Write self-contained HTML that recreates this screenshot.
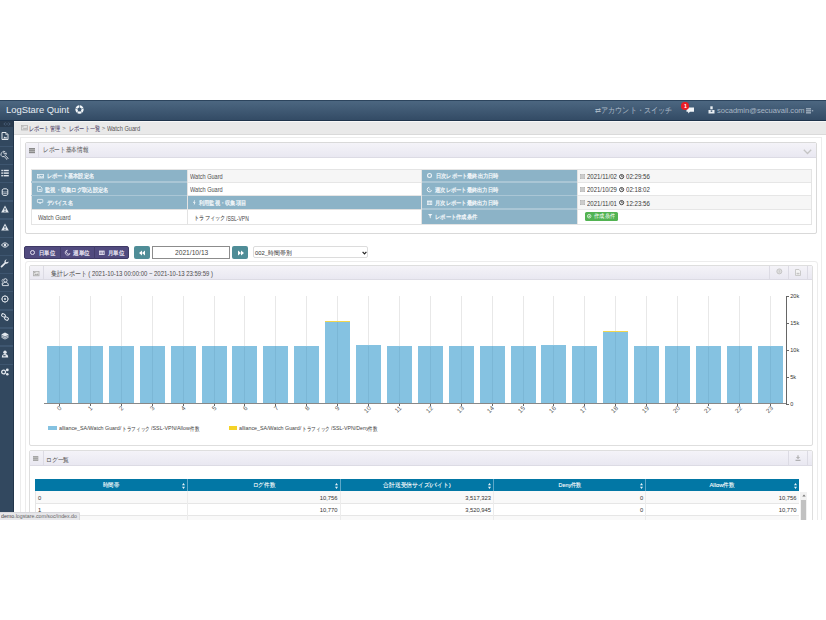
<!DOCTYPE html><html><head><meta charset="utf-8"><style>
*{box-sizing:border-box;margin:0;padding:0}
html,body{width:826px;height:620px;background:#fff;overflow:hidden;font-family:"Liberation Sans",sans-serif;color:#333}
.a{position:absolute}
.t{position:absolute;white-space:nowrap}
svg{position:absolute;overflow:visible}
</style></head><body>
<div class="a" style="left:0px;top:100px;width:826.00px;height:21.00px;background:linear-gradient(#4c6781,#334b65);border-top:1px solid #2c445d;border-bottom:1px solid #1e334b"></div>
<div id="f0" class="t fit" style="left:6px;top:104.95px;font-size:9.0px;line-height:11.70px;color:#e6edf3;transform:scaleX(1.0438);transform-origin:left center;--fw:63.2;">LogStare Quint</div>
<svg style="left:74.7px;top:104.5px" width="9" height="9" viewBox="0 0 9 9"><circle cx="4.5" cy="4.5" r="3.05" fill="none" stroke="#f4f8fb" stroke-width="2.2"/><g stroke="#3d5873" stroke-width="0.55"><line x1="4.50" y1="3.00" x2="4.50" y2="-0.10"/><line x1="5.93" y1="4.04" x2="8.87" y2="3.08"/><line x1="5.38" y1="5.71" x2="7.20" y2="8.22"/><line x1="3.62" y1="5.71" x2="1.80" y2="8.22"/><line x1="3.07" y1="4.04" x2="0.13" y2="3.08"/></g></svg>
<div id="f1" class="t fit" style="left:595px;top:105.61px;font-size:7.99px;line-height:10.39px;color:#a9b7c5;-webkit-text-stroke:0.05px currentColor;transform:scaleX(0.8851);transform-origin:left center;--fw:77;">&#8644;アカウント・スイッチ</div>
<svg style="left:686px;top:106px" width="9" height="9" viewBox="0 0 9 9"><path d="M0.5 1.5h7.5v4.2H4L2.2 7.5V5.7H0.5z" fill="#f2f5f8"/></svg>
<div class="a" style="left:681.3px;top:102.1px;width:7.6px;height:7.6px;border-radius:50%;background:#ea1c24"></div>
<div id="f2" class="t" style="left:683.9px;top:103.32px;font-size:5.2px;line-height:6.76px;color:#fff;transform-origin:left center;font-weight:bold">1</div>
<svg style="left:708px;top:106px" width="7" height="8" viewBox="0 0 7 8"><rect x="2.3" y="0.3" width="2.4" height="3" fill="#e9eef3"/><path d="M0.5 4h6v3.5h-6z" fill="#e9eef3"/><rect x="2.7" y="4.4" width="1.6" height="1.4" fill="#3d5670"/></svg>
<div id="f3" class="t fit" style="left:717px;top:105.76px;font-size:7.6px;line-height:9.88px;color:#a9b7c5;transform:scaleX(0.9918);transform-origin:left center;--fw:87.6;">socadmin@secuavail.com</div>
<svg style="left:806px;top:107.5px" width="8" height="6" viewBox="0 0 8 6"><g fill="#b9c6d3"><rect x="0" y="0.3" width="5" height="1.1"/><rect x="0" y="2.3" width="5" height="1.1"/><rect x="0" y="4.3" width="5" height="1.1"/><rect x="5.8" y="2.3" width="1.4" height="1"/></g></svg>
<div class="a" style="left:0px;top:121px;width:14.00px;height:399.00px;background:#32485f;"></div>
<div class="a" style="left:13px;top:121px;width:1.00px;height:399.00px;background:#22354a;"></div>
<div class="a" style="left:0px;top:121px;width:13.00px;height:6.00px;background:#28394c;"></div>
<div class="a" style="left:0px;top:145.8px;width:13.00px;height:1.40px;background:#3e5670;"></div>
<div class="a" style="left:0px;top:163.95000000000002px;width:13.00px;height:1.40px;background:#3e5670;"></div>
<div class="a" style="left:0px;top:182.10000000000002px;width:13.00px;height:1.40px;background:#3e5670;"></div>
<div class="a" style="left:0px;top:200.25px;width:13.00px;height:1.40px;background:#3e5670;"></div>
<div class="a" style="left:0px;top:218.4px;width:13.00px;height:1.40px;background:#3e5670;"></div>
<div class="a" style="left:0px;top:236.55px;width:13.00px;height:1.40px;background:#3e5670;"></div>
<div class="a" style="left:0px;top:254.7px;width:13.00px;height:1.40px;background:#3e5670;"></div>
<div class="a" style="left:0px;top:272.84999999999997px;width:13.00px;height:1.40px;background:#3e5670;"></div>
<div class="a" style="left:0px;top:291.0px;width:13.00px;height:1.40px;background:#3e5670;"></div>
<div class="a" style="left:0px;top:309.15000000000003px;width:13.00px;height:1.40px;background:#3e5670;"></div>
<div class="a" style="left:0px;top:327.3px;width:13.00px;height:1.40px;background:#3e5670;"></div>
<div class="a" style="left:0px;top:345.45px;width:13.00px;height:1.40px;background:#3e5670;"></div>
<div class="a" style="left:0px;top:363.59999999999997px;width:13.00px;height:1.40px;background:#3e5670;"></div>
<svg style="left:1.3px;top:132.0px" width="8" height="8" viewBox="0 0 8 8"><path d="M1 0.5h4l2 2v5h-6z" fill="none" stroke="#e3e8ee" stroke-width="1"/><path d="M4.8 0.6v2h2" fill="none" stroke="#e3e8ee" stroke-width="0.7"/><path d="M2.2 6.4l1.4-1.8 0.9 0.9 0.7-0.8 0.9 1.7z" fill="#e3e8ee"/></svg>
<svg style="left:1.3px;top:150.5px" width="8" height="8" viewBox="0 0 8 8"><path d="M1.2 1.4a1.9 1.9 0 0 1 2.6-0.9l-1.1 1.2 0.3 0.9 0.9 0.3 1.2-1.1a1.9 1.9 0 0 1-0.9 2.6l2.9 2.9-1.1 1.1-2.9-2.9a1.9 1.9 0 0 1-1.9-4.1z" fill="none" stroke="#e3e8ee" stroke-width="0.9"/></svg>
<svg style="left:1.3px;top:168.5px" width="8" height="8" viewBox="0 0 8 8"><g fill="#e3e8ee"><rect x="0.3" y="0.8" width="1.6" height="1.4"/><rect x="2.6" y="0.8" width="5.2" height="1.4"/><rect x="0.3" y="3.4" width="1.6" height="1.4"/><rect x="2.6" y="3.4" width="5.2" height="1.4"/><rect x="0.3" y="6" width="1.6" height="1.4"/><rect x="2.6" y="6" width="5.2" height="1.4"/></g></svg>
<svg style="left:1.3px;top:187.5px" width="8" height="8" viewBox="0 0 8 8"><path d="M1.2 1.8c0-1.4 5.6-1.4 5.6 0v4.6c0 1.4-5.6 1.4-5.6 0z" fill="none" stroke="#e3e8ee" stroke-width="1"/><path d="M1.2 3.4c1.4 0.8 4.2 0.8 5.6 0M1.2 4.9c1.4 0.8 4.2 0.8 5.6 0" fill="none" stroke="#e3e8ee" stroke-width="0.6"/></svg>
<svg style="left:1.3px;top:205.4px" width="8" height="8" viewBox="0 0 8 8"><path d="M4 0.4L7.8 7.5H0.2z" fill="#e3e8ee"/><rect x="3.45" y="2.9" width="1.1" height="2.5" fill="#32485f"/><rect x="3.45" y="6" width="1.1" height="0.9" fill="#32485f"/></svg>
<svg style="left:1.3px;top:223.4px" width="8" height="8" viewBox="0 0 8 8"><path d="M4 0.4L7.8 7.5H0.2z" fill="#e3e8ee"/><rect x="3.45" y="2.9" width="1.1" height="2.5" fill="#32485f"/><rect x="3.45" y="6" width="1.1" height="0.9" fill="#32485f"/></svg>
<svg style="left:1.3px;top:241.4px" width="8" height="8" viewBox="0 0 8 8"><path d="M0.5 4c1.9-2.8 5.1-2.8 7 0c-1.9 2.8-5.1 2.8-7 0z" fill="none" stroke="#e3e8ee" stroke-width="1"/><circle cx="4" cy="4" r="1.3" fill="#e3e8ee"/></svg>
<svg style="left:1.3px;top:259.6px" width="8" height="8" viewBox="0 0 8 8"><path d="M7.6 1.4a2.2 2.2 0 0 1-2.9 2.3l-3.5 3.6a0.9 0.9 0 0 1-1.3-1.3l3.6-3.5a2.2 2.2 0 0 1 2.3-2.9l-1.2 1.3 0.3 1 1 0.3z" fill="#e3e8ee"/></svg>
<svg style="left:1.3px;top:277.6px" width="8" height="8" viewBox="0 0 8 8"><circle cx="4.4" cy="2.4" r="1.7" fill="none" stroke="#e3e8ee" stroke-width="0.9"/><path d="M1.4 7.6c0-2.4 1.2-3.3 3-3.3s3 0.9 3 3.3z" fill="none" stroke="#e3e8ee" stroke-width="0.9"/><path d="M2.4 1.2a1.5 1.5 0 0 0-0.6 2.8M1 6.6c0-1.4 0.4-2 1-2.4" fill="none" stroke="#e3e8ee" stroke-width="0.7"/></svg>
<svg style="left:1.3px;top:295.4px" width="8" height="8" viewBox="0 0 8 8"><circle cx="4" cy="4" r="3.1" fill="none" stroke="#e3e8ee" stroke-width="1"/><circle cx="4" cy="4" r="1" fill="#e3e8ee"/><path d="M4 0.4v1.2M4 6.4v1.2M0.4 4h1.2M6.4 4h1.2" stroke="#e3e8ee" stroke-width="0.8"/></svg>
<svg style="left:1.3px;top:313.3px" width="8" height="8" viewBox="0 0 8 8"><g fill="none" stroke="#e3e8ee" stroke-width="1"><rect x="0.5" y="1" width="4" height="2.8" rx="1.4" transform="rotate(30 2.5 2.4)"/><rect x="3.5" y="4.2" width="4" height="2.8" rx="1.4" transform="rotate(30 5.5 5.6)"/></g></svg>
<svg style="left:1.3px;top:331.8px" width="8" height="8" viewBox="0 0 8 8"><path d="M4 0.6L7.4 2.3V5.7L4 7.4L0.6 5.7V2.3z" fill="#e3e8ee"/><path d="M0.8 3.3L4 4.9L7.2 3.3M0.8 4.8L4 6.4L7.2 4.8" fill="none" stroke="#32485f" stroke-width="0.6"/></svg>
<svg style="left:1.3px;top:349.8px" width="8" height="8" viewBox="0 0 8 8"><circle cx="4" cy="2.2" r="1.7" fill="#e3e8ee"/><path d="M0.8 7.6c0-2.6 1.4-3.5 3.2-3.5s3.2 0.9 3.2 3.5z" fill="#e3e8ee"/><rect x="2.2" y="5.2" width="2.4" height="1.1" fill="#32485f"/></svg>
<svg style="left:1.3px;top:367.6px" width="8" height="8" viewBox="0 0 8 8"><circle cx="2.6" cy="4" r="1.9" fill="none" stroke="#e3e8ee" stroke-width="1.3"/><circle cx="6.3" cy="1.9" r="1.4" fill="#e3e8ee"/><circle cx="6.3" cy="6.2" r="1.3" fill="#e3e8ee"/></svg>
<svg style="left:3px;top:122px" width="8" height="4" viewBox="0 0 8 4"><path d="M2.5 0.5L0.8 2L2.5 3.5M5.5 0.5L7.2 2L5.5 3.5" fill="none" stroke="#4e6580" stroke-width="0.8"/><rect x="2.8" y="1.6" width="2.4" height="0.8" fill="#4e6580"/></svg>
<div class="a" style="left:14px;top:121px;width:812.00px;height:14.20px;background:#e9e9e9;border-top:1px solid #f7f7f7;border-bottom:1px solid #dadada"></div>
<svg style="left:20.6px;top:125.3px" width="7" height="5.4" viewBox="0 0 7 5.4"><rect x="0.4" y="0.4" width="6.2" height="4.6" fill="#e4e4e4" stroke="#b5b5b5" stroke-width="0.8"/><rect x="1.2" y="1.2" width="1.4" height="1.1" fill="#b5b5b5"/><path d="M1.2 4.4l1.8-1.6 1 0.8 1.2-1.2 0.6 0.6v1.4z" fill="#b5b5b5"/></svg>
<div id="f4" class="t fit" style="left:29.3px;top:124.52px;font-size:6.59px;line-height:8.57px;color:#4e3f66;-webkit-text-stroke:0.05px currentColor;transform:scaleX(0.7333);transform-origin:left center;--fw:30.8;">レポート管理</div>
<div id="f5" class="t" style="left:62.3px;top:124.90px;font-size:6px;line-height:7.80px;color:#666;transform-origin:left center;">&gt;</div>
<div id="f6" class="t fit" style="left:68.6px;top:124.52px;font-size:6.59px;line-height:8.57px;color:#4e3f66;-webkit-text-stroke:0.05px currentColor;transform:scaleX(0.7381);transform-origin:left center;--fw:31;">レポート一覧</div>
<div id="f7" class="t" style="left:101.8px;top:124.90px;font-size:6px;line-height:7.80px;color:#666;transform-origin:left center;">&gt;</div>
<div id="f8" class="t fit" style="left:107.2px;top:124.71px;font-size:6.3px;line-height:8.19px;color:#555;transform:scaleX(0.8976);transform-origin:left center;--fw:33.1;">Watch Guard</div>
<div class="a" style="left:20px;top:137px;width:802px;height:383px;border:1px solid #ececec;border-bottom:none"></div>
<div class="a" style="left:25px;top:142px;width:792px;height:92px;border:1px solid #d9d9d9;border-radius:2px;background:#fff"></div>
<div class="a" style="left:26px;top:143px;width:790.00px;height:15.00px;background:linear-gradient(#f4f3f8,#e9e8f1);border-bottom:1px solid #dcdbe4"></div>
<div class="a" style="left:38px;top:143px;width:1.00px;height:15.00px;background:#dcdbe4;"></div>
<svg style="left:29px;top:147.6px" width="6" height="5.2" viewBox="0 0 6 5.2"><rect x="0" y="0" width="6" height="5.2" fill="#8a8a8a"/><rect x="0" y="1.6" width="6" height="0.5" fill="#dcdcdc"/><rect x="0" y="3.2" width="6" height="0.5" fill="#dcdcdc"/></svg>
<div id="f9" class="t fit" style="left:42.6px;top:146.35px;font-size:6.7px;line-height:8.71px;color:#666;-webkit-text-stroke:0.05px currentColor;transform:scaleX(0.8089);transform-origin:left center;--fw:45.3;">レポート基本情報</div>
<svg style="left:803px;top:149px" width="9" height="6" viewBox="0 0 9 6"><path d="M0.8 0.8L4.5 4.5L8.2 0.8" fill="none" stroke="#c4c4c4" stroke-width="1.3"/></svg>
<div class="a" style="left:31px;top:169px;width:156.00px;height:40.00px;background:#8cb3c7;"></div>
<div class="a" style="left:187px;top:169px;width:234.00px;height:13.00px;background:#f6f6f6;"></div>
<div class="a" style="left:187px;top:182px;width:234.00px;height:13.30px;background:#fff;"></div>
<div class="a" style="left:187px;top:195.3px;width:234.00px;height:13.70px;background:#8cb3c7;"></div>
<div class="a" style="left:31px;top:209px;width:390.00px;height:15.50px;background:#fff;"></div>
<div class="a" style="left:421px;top:169px;width:156.00px;height:55.50px;background:#8cb3c7;"></div>
<div class="a" style="left:577px;top:169px;width:234.00px;height:13.00px;background:#f6f6f6;"></div>
<div class="a" style="left:577px;top:182px;width:234.00px;height:13.30px;background:#fff;"></div>
<div class="a" style="left:577px;top:195.3px;width:234.00px;height:13.70px;background:#f6f6f6;"></div>
<div class="a" style="left:577px;top:209px;width:234.00px;height:15.50px;background:#fff;"></div>
<div class="a" style="left:30.5px;top:168.5px;width:781px;height:56.5px;border:1px solid #e4e4e4"></div>
<div class="a" style="left:31px;top:181.4px;width:156.00px;height:1.20px;background:#aac6d5;"></div>
<div class="a" style="left:421px;top:181.4px;width:156.00px;height:1.20px;background:#aac6d5;"></div>
<div class="a" style="left:187px;top:181.5px;width:234.00px;height:1.00px;background:#e6e6e6;"></div>
<div class="a" style="left:577px;top:181.5px;width:234.00px;height:1.00px;background:#e6e6e6;"></div>
<div class="a" style="left:31px;top:194.70000000000002px;width:156.00px;height:1.20px;background:#aac6d5;"></div>
<div class="a" style="left:421px;top:194.70000000000002px;width:156.00px;height:1.20px;background:#aac6d5;"></div>
<div class="a" style="left:187px;top:194.8px;width:234.00px;height:1.00px;background:#e6e6e6;"></div>
<div class="a" style="left:577px;top:194.8px;width:234.00px;height:1.00px;background:#e6e6e6;"></div>
<div class="a" style="left:31px;top:208.5px;width:390.00px;height:1.00px;background:#e0e0e0;"></div>
<div class="a" style="left:421px;top:208.4px;width:156.00px;height:1.20px;background:#aac6d5;"></div>
<div class="a" style="left:577px;top:208.5px;width:234.00px;height:1.00px;background:#e6e6e6;"></div>
<div class="a" style="left:186.5px;top:169px;width:1.00px;height:55.50px;background:#e3e3e3;"></div>
<div class="a" style="left:420.5px;top:169px;width:1.00px;height:55.50px;background:#e3e3e3;"></div>
<div class="a" style="left:576.5px;top:169px;width:1.00px;height:55.50px;background:#e3e3e3;"></div>
<div id="f10" class="t fit" style="left:46.8px;top:172.13px;font-size:6.26px;line-height:8.14px;color:#f3f7fa;-webkit-text-stroke:0.24px currentColor;transform:scaleX(0.8741);transform-origin:left center;--fw:47.2;">レポート基本設定名</div>
<div id="f11" class="t fit" style="left:45px;top:185.63px;font-size:6.26px;line-height:8.14px;color:#f3f7fa;-webkit-text-stroke:0.24px currentColor;transform:scaleX(0.8819);transform-origin:left center;--fw:63.5;">監視・収集ログ取込設定名</div>
<div id="f12" class="t fit" style="left:46.5px;top:198.63px;font-size:6.26px;line-height:8.14px;color:#f3f7fa;-webkit-text-stroke:0.24px currentColor;transform:scaleX(0.8567);transform-origin:left center;--fw:25.7;">デバイス名</div>
<div id="f13" class="t fit" style="left:37.7px;top:214.41px;font-size:6.6px;line-height:8.58px;color:#505050;transform:scaleX(0.8469);transform-origin:left center;--fw:32.7;">Watch Guard</div>
<div id="f14" class="t fit" style="left:190.3px;top:172.91px;font-size:6.6px;line-height:8.58px;color:#505050;transform:scaleX(0.8469);transform-origin:left center;--fw:32.7;">Watch Guard</div>
<div id="f15" class="t fit" style="left:190.3px;top:186.11px;font-size:6.6px;line-height:8.58px;color:#505050;transform:scaleX(0.8469);transform-origin:left center;--fw:32.7;">Watch Guard</div>
<div id="f16" class="t fit" style="left:199.4px;top:198.63px;font-size:6.26px;line-height:8.14px;color:#f3f7fa;-webkit-text-stroke:0.24px currentColor;transform:scaleX(0.8704);transform-origin:left center;--fw:47;">利用監視・収集項目</div>
<div id="f17" class="t fit" style="left:194.3px;top:214.03px;font-size:6.26px;line-height:8.14px;color:#333;-webkit-text-stroke:0.05px currentColor;transform:scaleX(0.8750);transform-origin:left center;--fw:31.5;">トラフィック</div>
<div id="f18" class="t fit" style="left:226.0px;top:214.71px;font-size:6.6px;line-height:8.58px;color:#444;transform:scaleX(0.7584);transform-origin:left center;--fw:22.8;">/SSL-VPN</div>
<div id="f19" class="t fit" style="left:436px;top:172.13px;font-size:6.26px;line-height:8.14px;color:#f3f7fa;-webkit-text-stroke:0.24px currentColor;transform:scaleX(0.8681);transform-origin:left center;--fw:62.5;">日次レポート最終出力日時</div>
<div id="f20" class="t fit" style="left:435px;top:185.63px;font-size:6.26px;line-height:8.14px;color:#f3f7fa;-webkit-text-stroke:0.24px currentColor;transform:scaleX(0.8750);transform-origin:left center;--fw:63;">週次レポート最終出力日時</div>
<div id="f21" class="t fit" style="left:435px;top:198.83px;font-size:6.26px;line-height:8.14px;color:#f3f7fa;-webkit-text-stroke:0.24px currentColor;transform:scaleX(0.8750);transform-origin:left center;--fw:63;">月次レポート最終出力日時</div>
<div id="f22" class="t fit" style="left:434.6px;top:212.83px;font-size:6.26px;line-height:8.14px;color:#f3f7fa;-webkit-text-stroke:0.24px currentColor;transform:scaleX(0.8750);transform-origin:left center;--fw:42;">レポート作成条件</div>
<div id="f23" class="t fit" style="left:586.7px;top:173.11px;font-size:6.6px;line-height:8.58px;color:#3a3a3a;transform:scaleX(0.9196);transform-origin:left center;--fw:29.9;">2021/11/02</div>
<div id="f24" class="t fit" style="left:626px;top:173.11px;font-size:6.6px;line-height:8.58px;color:#3a3a3a;transform:scaleX(0.9310);transform-origin:left center;--fw:23.9;">02:29:56</div>
<div id="f25" class="t fit" style="left:586.7px;top:186.31px;font-size:6.6px;line-height:8.58px;color:#3a3a3a;transform:scaleX(0.9056);transform-origin:left center;--fw:29.9;">2021/10/29</div>
<div id="f26" class="t fit" style="left:626px;top:186.31px;font-size:6.6px;line-height:8.58px;color:#3a3a3a;transform:scaleX(0.9310);transform-origin:left center;--fw:23.9;">02:18:02</div>
<div id="f27" class="t fit" style="left:586.7px;top:199.71px;font-size:6.6px;line-height:8.58px;color:#3a3a3a;transform:scaleX(0.9196);transform-origin:left center;--fw:29.9;">2021/11/01</div>
<div id="f28" class="t fit" style="left:626px;top:199.71px;font-size:6.6px;line-height:8.58px;color:#3a3a3a;transform:scaleX(0.9310);transform-origin:left center;--fw:23.9;">12:23:56</div>
<svg style="left:37.1px;top:173.6px" width="7" height="4.2" viewBox="0 0 7 4.2"><rect x="0.4" y="0.4" width="6.2" height="3.6" fill="none" stroke="#eef4f8" stroke-width="0.8"/><rect x="1.3" y="1.3" width="1.3" height="1" fill="#eef4f8"/><path d="M1.2 3.4l2-1.4 1.2 0.8 1.4-1v1.6z" fill="#eef4f8"/></svg>
<svg style="left:37.1px;top:186.2px" width="5.4" height="5.6" viewBox="0 0 5.4 5.6"><path d="M0.4 0.4h3l1.6 1.6v3.4h-4.6z" fill="none" stroke="#eef4f8" stroke-width="0.8"/><path d="M1.4 4.2l1-1.2 0.6 0.6 0.6-0.6 0.6 1.2z" fill="#eef4f8"/></svg>
<svg style="left:37.1px;top:199.4px" width="6.2" height="4.8" viewBox="0 0 6.2 4.8"><rect x="0.4" y="0.4" width="5.4" height="3.2" rx="0.5" fill="none" stroke="#eef4f8" stroke-width="0.8"/><rect x="2.3" y="3.6" width="1.6" height="1.1" fill="#eef4f8"/></svg>
<svg style="left:193.4px;top:199.6px" width="2.6" height="5.4" viewBox="0 0 2.6 5.4"><path d="M1.6 0L0 3h1.1L0.8 5.4L2.6 2.2H1.5L2 0z" fill="#eef4f8"/></svg>
<svg style="left:427.2px;top:173.3px" width="5" height="5" viewBox="0 0 5 5"><circle cx="2.5" cy="2.5" r="1.95" fill="none" stroke="#eef4f8" stroke-width="1.1"/></svg>
<svg style="left:427.2px;top:186.8px" width="5" height="5" viewBox="0 0 5 5"><path d="M2.3 0.3a2.3 2.3 0 1 0 2.4 3" fill="none" stroke="#eef4f8" stroke-width="1"/><path d="M2.3 1.4a1.2 1.2 0 0 0 1.6 1.6" fill="none" stroke="#eef4f8" stroke-width="0.6"/></svg>
<svg style="left:427.2px;top:199.8px" width="5.2" height="5" viewBox="0 0 5.2 5"><rect x="0" y="0.6" width="5.2" height="4.4" fill="#eef4f8"/><g fill="#8cb3c7"><rect x="0.6" y="1.8" width="1" height="0.9"/><rect x="2.1" y="1.8" width="1" height="0.9"/><rect x="3.6" y="1.8" width="1" height="0.9"/><rect x="0.6" y="3.3" width="1" height="0.9"/><rect x="2.1" y="3.3" width="1" height="0.9"/><rect x="3.6" y="3.3" width="1" height="0.9"/></g></svg>
<svg style="left:428px;top:214.4px" width="4.4" height="4.4" viewBox="0 0 4.4 4.4"><path d="M0 0h4.4L2.7 2v2.4L1.7 3.6V2z" fill="#eef4f8"/></svg>
<svg style="left:579.7px;top:173.6px" width="5" height="5" viewBox="0 0 5 5"><rect x="0.3" y="0.3" width="4.4" height="4.4" fill="#eee" stroke="#aaa" stroke-width="0.6"/><rect x="1" y="1.5" width="3" height="0.5" fill="#aaa"/><rect x="1" y="2.5" width="3" height="0.5" fill="#aaa"/><rect x="1" y="3.5" width="3" height="0.5" fill="#aaa"/></svg>
<svg style="left:619.2px;top:173.6px" width="5.2" height="5.2" viewBox="0 0 5.2 5.2"><circle cx="2.6" cy="2.6" r="2.1" fill="none" stroke="#333" stroke-width="0.9"/><path d="M2.6 1.2v1.5h1.2" fill="none" stroke="#333" stroke-width="0.7"/></svg>
<svg style="left:579.7px;top:187.0px" width="5" height="5" viewBox="0 0 5 5"><rect x="0.3" y="0.3" width="4.4" height="4.4" fill="#eee" stroke="#aaa" stroke-width="0.6"/><rect x="1" y="1.5" width="3" height="0.5" fill="#aaa"/><rect x="1" y="2.5" width="3" height="0.5" fill="#aaa"/><rect x="1" y="3.5" width="3" height="0.5" fill="#aaa"/></svg>
<svg style="left:619.2px;top:187.0px" width="5.2" height="5.2" viewBox="0 0 5.2 5.2"><circle cx="2.6" cy="2.6" r="2.1" fill="none" stroke="#333" stroke-width="0.9"/><path d="M2.6 1.2v1.5h1.2" fill="none" stroke="#333" stroke-width="0.7"/></svg>
<svg style="left:579.7px;top:200.4px" width="5" height="5" viewBox="0 0 5 5"><rect x="0.3" y="0.3" width="4.4" height="4.4" fill="#eee" stroke="#aaa" stroke-width="0.6"/><rect x="1" y="1.5" width="3" height="0.5" fill="#aaa"/><rect x="1" y="2.5" width="3" height="0.5" fill="#aaa"/><rect x="1" y="3.5" width="3" height="0.5" fill="#aaa"/></svg>
<svg style="left:619.2px;top:200.4px" width="5.2" height="5.2" viewBox="0 0 5.2 5.2"><circle cx="2.6" cy="2.6" r="2.1" fill="none" stroke="#333" stroke-width="0.9"/><path d="M2.6 1.2v1.5h1.2" fill="none" stroke="#333" stroke-width="0.7"/></svg>
<div class="a" style="left:585px;top:212.2px;width:32.80px;height:9.10px;background:#52b352;border-radius:1.5px"></div>
<div id="f29" class="t fit" style="left:594px;top:213.27px;font-size:6.05px;line-height:7.87px;color:#fff;-webkit-text-stroke:0.24px currentColor;transform:scaleX(0.8750);transform-origin:left center;--fw:21;-webkit-text-stroke:0;">作成条件</div>
<svg style="left:587.2px;top:214.3px" width="4.4" height="4.4" viewBox="0 0 4.4 4.4"><circle cx="2.2" cy="2.2" r="1.8" fill="none" stroke="#fff" stroke-width="0.7"/><circle cx="2.2" cy="2.2" r="0.7" fill="#fff"/></svg>
<div class="a" style="left:24.5px;top:260.5px;width:793px;height:300px;border:1px solid #ececec;border-radius:3px"></div>
<div class="a" style="left:24.4px;top:245.9px;width:104.80px;height:13.10px;background:#514b7f;border-radius:2px;border:0.5px solid #3f3a66"></div>
<div class="a" style="left:59.5px;top:246.3px;width:1.00px;height:12.30px;background:#433e6c;"></div>
<div class="a" style="left:94.1px;top:246.3px;width:1.00px;height:12.30px;background:#433e6c;"></div>
<div id="f30" class="t fit" style="left:38.6px;top:248.93px;font-size:6.26px;line-height:8.14px;color:#e4e1f0;-webkit-text-stroke:0.24px currentColor;transform:scaleX(0.8889);transform-origin:left center;--fw:16;">日単位</div>
<svg style="left:29.8px;top:250px" width="5" height="5" viewBox="0 0 5 5"><circle cx="2.5" cy="2.5" r="2" fill="none" stroke="#e4e1f0" stroke-width="1"/></svg>
<svg style="left:64.6px;top:250px" width="5.2" height="5.2" viewBox="0 0 5.2 5.2"><path d="M2.3 0.2a2.5 2.5 0 1 0 2.7 3.4a2.1 2.1 0 0 1-2.7-3.4z" fill="none" stroke="#e4e1f0" stroke-width="0.8"/></svg>
<svg style="left:99.3px;top:250.2px" width="5.6" height="5" viewBox="0 0 5.6 5"><rect x="0" y="0.6" width="5.6" height="4.4" fill="#e4e1f0"/><g fill="#514b7f"><rect x="0.7" y="1.8" width="1" height="0.8"/><rect x="2.3" y="1.8" width="1" height="0.8"/><rect x="3.9" y="1.8" width="1" height="0.8"/><rect x="0.7" y="3.3" width="1" height="0.8"/><rect x="2.3" y="3.3" width="1" height="0.8"/><rect x="3.9" y="3.3" width="1" height="0.8"/></g></svg>
<div id="f31" class="t fit" style="left:72.6px;top:248.93px;font-size:6.26px;line-height:8.14px;color:#e4e1f0;-webkit-text-stroke:0.24px currentColor;transform:scaleX(0.9222);transform-origin:left center;--fw:16.6;">週単位</div>
<div id="f32" class="t fit" style="left:107.9px;top:248.93px;font-size:6.26px;line-height:8.14px;color:#e4e1f0;-webkit-text-stroke:0.24px currentColor;transform:scaleX(0.9111);transform-origin:left center;--fw:16.4;">月単位</div>
<div class="a" style="left:133.8px;top:246px;width:16.20px;height:12.70px;background:#4f8d97;border-radius:2px"></div>
<div class="a" style="left:232.3px;top:246px;width:15.60px;height:12.70px;background:#4f8d97;border-radius:2px"></div>
<svg style="left:138px;top:249.5px" width="8" height="6" viewBox="0 0 8 6"><path d="M4 0.5L1 3L4 5.5zM7 0.5L4 3L7 5.5z" fill="#fff"/></svg>
<svg style="left:236.5px;top:249.5px" width="8" height="6" viewBox="0 0 8 6"><path d="M1 0.5L4 3L1 5.5zM4 0.5L7 3L4 5.5z" fill="#fff"/></svg>
<div class="a" style="left:151.6px;top:245.8px;width:78.8px;height:13px;border:1px solid #8c8c8c;background:#fff"></div>
<div id="f33" class="t fit" style="left:174.7px;top:249.21px;font-size:6.6px;line-height:8.58px;color:#444;transform:scaleX(1.0086);transform-origin:left center;--fw:33.3;">2021/10/13</div>
<div class="a" style="left:252.6px;top:246px;width:115.8px;height:12.3px;border:1px solid #dcdcdc;border-radius:2px;background:#fff"></div>
<div id="f34" class="t fit" style="left:255.2px;top:249.87px;font-size:6.05px;line-height:7.87px;color:#444;-webkit-text-stroke:0.05px currentColor;transform:scaleX(0.9719);transform-origin:left center;--fw:36.4;">002_時間帯別</div>
<svg style="left:362px;top:250.5px" width="5" height="4" viewBox="0 0 5 4"><path d="M0.6 0.8L2.5 2.8L4.4 0.8" fill="none" stroke="#222" stroke-width="1.2"/></svg>
<div class="a" style="left:28.7px;top:265.3px;width:783.9px;height:180.3px;border:1px solid #dedede;border-radius:2px;background:#fff"></div>
<div class="a" style="left:29.7px;top:266.3px;width:781.90px;height:14.20px;background:linear-gradient(#f4f3f8,#e9e8f1);border-bottom:1px solid #dcdbe4"></div>
<div class="a" style="left:43px;top:266.3px;width:1.00px;height:14.20px;background:#dcdbe4;"></div>
<div class="a" style="left:769.3px;top:266.3px;width:1.00px;height:14.20px;background:#dcdbe4;"></div>
<div class="a" style="left:788.2px;top:266.3px;width:1.00px;height:14.20px;background:#dcdbe4;"></div>
<div class="a" style="left:806.5px;top:266.3px;width:1.00px;height:14.20px;background:#dcdbe4;"></div>
<svg style="left:33.1px;top:270.5px" width="6.4" height="5.2" viewBox="0 0 6.4 5.2"><rect x="0.35" y="0.35" width="5.7" height="4.5" fill="#e2e2e2" stroke="#a8a8a8" stroke-width="0.7"/><rect x="1.1" y="1.1" width="1.3" height="1" fill="#a8a8a8"/><path d="M1 4.2l1.6-1.4 0.9 0.7 1.1-1 0.8 0.8v0.9z" fill="#a8a8a8"/></svg>
<div id="f35" class="t fit" style="left:50.5px;top:268.64px;font-size:7.02px;line-height:9.13px;color:#555;-webkit-text-stroke:0.05px currentColor;transform:scaleX(0.8490);transform-origin:left center;--fw:162;">集計レポート ( 2021-10-13 00:00:00 ~ 2021-10-13 23:59:59 )</div>
<svg style="left:775.6px;top:268.4px" width="7" height="7" viewBox="0 0 7 7"><circle cx="3.3" cy="3.4" r="2.5" fill="#dedede" stroke="#c2c2c2" stroke-width="0.9"/><rect x="2.9" y="2.2" width="0.8" height="2.4" fill="#c8c8c8"/></svg>
<svg style="left:795px;top:268.5px" width="6" height="7" viewBox="0 0 6 7"><path d="M0.5 0.5h3.5l1.5 1.5v4.5h-5z" fill="#f4f4f4" stroke="#c5c5c5" stroke-width="0.9"/><rect x="1.5" y="3.8" width="3" height="1.6" fill="#c5c5c5"/></svg>
<div class="a" style="left:59.0px;top:296px;width:1.00px;height:108.00px;background:#e8e8e8;"></div>
<div class="a" style="left:89.9px;top:296px;width:1.00px;height:108.00px;background:#e8e8e8;"></div>
<div class="a" style="left:120.8px;top:296px;width:1.00px;height:108.00px;background:#e8e8e8;"></div>
<div class="a" style="left:151.7px;top:296px;width:1.00px;height:108.00px;background:#e8e8e8;"></div>
<div class="a" style="left:182.6px;top:296px;width:1.00px;height:108.00px;background:#e8e8e8;"></div>
<div class="a" style="left:213.5px;top:296px;width:1.00px;height:108.00px;background:#e8e8e8;"></div>
<div class="a" style="left:244.39999999999998px;top:296px;width:1.00px;height:108.00px;background:#e8e8e8;"></div>
<div class="a" style="left:275.29999999999995px;top:296px;width:1.00px;height:108.00px;background:#e8e8e8;"></div>
<div class="a" style="left:306.2px;top:296px;width:1.00px;height:108.00px;background:#e8e8e8;"></div>
<div class="a" style="left:337.09999999999997px;top:296px;width:1.00px;height:108.00px;background:#e8e8e8;"></div>
<div class="a" style="left:368.0px;top:296px;width:1.00px;height:108.00px;background:#e8e8e8;"></div>
<div class="a" style="left:398.9px;top:296px;width:1.00px;height:108.00px;background:#e8e8e8;"></div>
<div class="a" style="left:429.79999999999995px;top:296px;width:1.00px;height:108.00px;background:#e8e8e8;"></div>
<div class="a" style="left:460.7px;top:296px;width:1.00px;height:108.00px;background:#e8e8e8;"></div>
<div class="a" style="left:491.59999999999997px;top:296px;width:1.00px;height:108.00px;background:#e8e8e8;"></div>
<div class="a" style="left:522.5px;top:296px;width:1.00px;height:108.00px;background:#e8e8e8;"></div>
<div class="a" style="left:553.4px;top:296px;width:1.00px;height:108.00px;background:#e8e8e8;"></div>
<div class="a" style="left:584.3px;top:296px;width:1.00px;height:108.00px;background:#e8e8e8;"></div>
<div class="a" style="left:615.1999999999999px;top:296px;width:1.00px;height:108.00px;background:#e8e8e8;"></div>
<div class="a" style="left:646.1px;top:296px;width:1.00px;height:108.00px;background:#e8e8e8;"></div>
<div class="a" style="left:677.0px;top:296px;width:1.00px;height:108.00px;background:#e8e8e8;"></div>
<div class="a" style="left:707.9px;top:296px;width:1.00px;height:108.00px;background:#e8e8e8;"></div>
<div class="a" style="left:738.8px;top:296px;width:1.00px;height:108.00px;background:#e8e8e8;"></div>
<div class="a" style="left:769.6999999999999px;top:296px;width:1.00px;height:108.00px;background:#e8e8e8;"></div>
<div class="a" style="left:47.0px;top:345.9px;width:25.00px;height:58.10px;background:#85c2e1;"></div>
<div class="a" style="left:47.0px;top:345.9px;width:25.00px;height:0.00px;background:#f2d64c;"></div>
<div class="a" style="left:59.0px;top:346.7px;width:1.00px;height:57.30px;background:rgba(60,110,140,0.12);"></div>
<div class="a" style="left:77.9px;top:345.5px;width:25.00px;height:58.50px;background:#85c2e1;"></div>
<div class="a" style="left:77.9px;top:345.5px;width:25.00px;height:0.00px;background:#f2d64c;"></div>
<div class="a" style="left:89.9px;top:346.3px;width:1.00px;height:57.70px;background:rgba(60,110,140,0.12);"></div>
<div class="a" style="left:108.8px;top:345.9px;width:25.00px;height:58.10px;background:#85c2e1;"></div>
<div class="a" style="left:108.8px;top:345.9px;width:25.00px;height:0.00px;background:#f2d64c;"></div>
<div class="a" style="left:120.8px;top:346.7px;width:1.00px;height:57.30px;background:rgba(60,110,140,0.12);"></div>
<div class="a" style="left:139.7px;top:345.6px;width:25.00px;height:58.40px;background:#85c2e1;"></div>
<div class="a" style="left:139.7px;top:345.6px;width:25.00px;height:0.00px;background:#f2d64c;"></div>
<div class="a" style="left:151.7px;top:346.40000000000003px;width:1.00px;height:57.60px;background:rgba(60,110,140,0.12);"></div>
<div class="a" style="left:170.6px;top:345.9px;width:25.00px;height:58.10px;background:#85c2e1;"></div>
<div class="a" style="left:170.6px;top:345.9px;width:25.00px;height:0.00px;background:#f2d64c;"></div>
<div class="a" style="left:182.6px;top:346.7px;width:1.00px;height:57.30px;background:rgba(60,110,140,0.12);"></div>
<div class="a" style="left:201.5px;top:345.6px;width:25.00px;height:58.40px;background:#85c2e1;"></div>
<div class="a" style="left:201.5px;top:345.6px;width:25.00px;height:0.00px;background:#f2d64c;"></div>
<div class="a" style="left:213.5px;top:346.40000000000003px;width:1.00px;height:57.60px;background:rgba(60,110,140,0.12);"></div>
<div class="a" style="left:232.39999999999998px;top:345.9px;width:25.00px;height:58.10px;background:#85c2e1;"></div>
<div class="a" style="left:232.39999999999998px;top:345.9px;width:25.00px;height:0.00px;background:#f2d64c;"></div>
<div class="a" style="left:244.39999999999998px;top:346.7px;width:1.00px;height:57.30px;background:rgba(60,110,140,0.12);"></div>
<div class="a" style="left:263.29999999999995px;top:345.6px;width:25.00px;height:58.40px;background:#85c2e1;"></div>
<div class="a" style="left:263.29999999999995px;top:345.6px;width:25.00px;height:0.00px;background:#f2d64c;"></div>
<div class="a" style="left:275.29999999999995px;top:346.40000000000003px;width:1.00px;height:57.60px;background:rgba(60,110,140,0.12);"></div>
<div class="a" style="left:294.2px;top:345.9px;width:25.00px;height:58.10px;background:#85c2e1;"></div>
<div class="a" style="left:294.2px;top:345.9px;width:25.00px;height:0.00px;background:#f2d64c;"></div>
<div class="a" style="left:306.2px;top:346.7px;width:1.00px;height:57.30px;background:rgba(60,110,140,0.12);"></div>
<div class="a" style="left:325.09999999999997px;top:321.2px;width:25.00px;height:82.80px;background:#85c2e1;"></div>
<div class="a" style="left:325.09999999999997px;top:320.75px;width:25.00px;height:0.90px;background:#f2d64c;"></div>
<div class="a" style="left:337.09999999999997px;top:322.0px;width:1.00px;height:82.00px;background:rgba(60,110,140,0.12);"></div>
<div class="a" style="left:356.0px;top:345.4px;width:25.00px;height:58.60px;background:#85c2e1;"></div>
<div class="a" style="left:356.0px;top:345.4px;width:25.00px;height:0.00px;background:#f2d64c;"></div>
<div class="a" style="left:368.0px;top:346.2px;width:1.00px;height:57.80px;background:rgba(60,110,140,0.12);"></div>
<div class="a" style="left:386.9px;top:345.7px;width:25.00px;height:58.30px;background:#85c2e1;"></div>
<div class="a" style="left:386.9px;top:345.7px;width:25.00px;height:0.00px;background:#f2d64c;"></div>
<div class="a" style="left:398.9px;top:346.5px;width:1.00px;height:57.50px;background:rgba(60,110,140,0.12);"></div>
<div class="a" style="left:417.79999999999995px;top:345.8px;width:25.00px;height:58.20px;background:#85c2e1;"></div>
<div class="a" style="left:417.79999999999995px;top:345.8px;width:25.00px;height:0.00px;background:#f2d64c;"></div>
<div class="a" style="left:429.79999999999995px;top:346.6px;width:1.00px;height:57.40px;background:rgba(60,110,140,0.12);"></div>
<div class="a" style="left:448.7px;top:345.6px;width:25.00px;height:58.40px;background:#85c2e1;"></div>
<div class="a" style="left:448.7px;top:345.6px;width:25.00px;height:0.00px;background:#f2d64c;"></div>
<div class="a" style="left:460.7px;top:346.40000000000003px;width:1.00px;height:57.60px;background:rgba(60,110,140,0.12);"></div>
<div class="a" style="left:479.59999999999997px;top:345.6px;width:25.00px;height:58.40px;background:#85c2e1;"></div>
<div class="a" style="left:479.59999999999997px;top:345.6px;width:25.00px;height:0.00px;background:#f2d64c;"></div>
<div class="a" style="left:491.59999999999997px;top:346.40000000000003px;width:1.00px;height:57.60px;background:rgba(60,110,140,0.12);"></div>
<div class="a" style="left:510.5px;top:345.8px;width:25.00px;height:58.20px;background:#85c2e1;"></div>
<div class="a" style="left:510.5px;top:345.8px;width:25.00px;height:0.00px;background:#f2d64c;"></div>
<div class="a" style="left:522.5px;top:346.6px;width:1.00px;height:57.40px;background:rgba(60,110,140,0.12);"></div>
<div class="a" style="left:541.4px;top:345.4px;width:25.00px;height:58.60px;background:#85c2e1;"></div>
<div class="a" style="left:541.4px;top:345.4px;width:25.00px;height:0.00px;background:#f2d64c;"></div>
<div class="a" style="left:553.4px;top:346.2px;width:1.00px;height:57.80px;background:rgba(60,110,140,0.12);"></div>
<div class="a" style="left:572.3px;top:345.9px;width:25.00px;height:58.10px;background:#85c2e1;"></div>
<div class="a" style="left:572.3px;top:345.9px;width:25.00px;height:0.00px;background:#f2d64c;"></div>
<div class="a" style="left:584.3px;top:346.7px;width:1.00px;height:57.30px;background:rgba(60,110,140,0.12);"></div>
<div class="a" style="left:603.1999999999999px;top:331.3px;width:25.00px;height:72.70px;background:#85c2e1;"></div>
<div class="a" style="left:603.1999999999999px;top:330.85px;width:25.00px;height:0.90px;background:#f2d64c;"></div>
<div class="a" style="left:615.1999999999999px;top:332.1px;width:1.00px;height:71.90px;background:rgba(60,110,140,0.12);"></div>
<div class="a" style="left:634.1px;top:345.9px;width:25.00px;height:58.10px;background:#85c2e1;"></div>
<div class="a" style="left:634.1px;top:345.9px;width:25.00px;height:0.00px;background:#f2d64c;"></div>
<div class="a" style="left:646.1px;top:346.7px;width:1.00px;height:57.30px;background:rgba(60,110,140,0.12);"></div>
<div class="a" style="left:665.0px;top:345.5px;width:25.00px;height:58.50px;background:#85c2e1;"></div>
<div class="a" style="left:665.0px;top:345.5px;width:25.00px;height:0.00px;background:#f2d64c;"></div>
<div class="a" style="left:677.0px;top:346.3px;width:1.00px;height:57.70px;background:rgba(60,110,140,0.12);"></div>
<div class="a" style="left:695.9px;top:345.9px;width:25.00px;height:58.10px;background:#85c2e1;"></div>
<div class="a" style="left:695.9px;top:345.9px;width:25.00px;height:0.00px;background:#f2d64c;"></div>
<div class="a" style="left:707.9px;top:346.7px;width:1.00px;height:57.30px;background:rgba(60,110,140,0.12);"></div>
<div class="a" style="left:726.8px;top:345.6px;width:25.00px;height:58.40px;background:#85c2e1;"></div>
<div class="a" style="left:726.8px;top:345.6px;width:25.00px;height:0.00px;background:#f2d64c;"></div>
<div class="a" style="left:738.8px;top:346.40000000000003px;width:1.00px;height:57.60px;background:rgba(60,110,140,0.12);"></div>
<div class="a" style="left:757.6999999999999px;top:345.8px;width:25.00px;height:58.20px;background:#85c2e1;"></div>
<div class="a" style="left:757.6999999999999px;top:345.8px;width:25.00px;height:0.00px;background:#f2d64c;"></div>
<div class="a" style="left:769.6999999999999px;top:346.6px;width:1.00px;height:57.40px;background:rgba(60,110,140,0.12);"></div>
<div class="a" style="left:43.8px;top:403.4px;width:742.70px;height:1.00px;background:#888;"></div>
<div class="a" style="left:59.0px;top:404px;width:1.00px;height:1.60px;background:#666;"></div>
<div class="a" style="left:60.90px;top:406.6px;width:0;height:0"><div class="t" style="right:0;top:-4px;line-height:8px;font-size:6.3px;color:#555;transform:rotate(-45deg);transform-origin:right center">0</div></div>
<div class="a" style="left:89.9px;top:404px;width:1.00px;height:1.60px;background:#666;"></div>
<div class="a" style="left:91.80px;top:406.6px;width:0;height:0"><div class="t" style="right:0;top:-4px;line-height:8px;font-size:6.3px;color:#555;transform:rotate(-45deg);transform-origin:right center">1</div></div>
<div class="a" style="left:120.8px;top:404px;width:1.00px;height:1.60px;background:#666;"></div>
<div class="a" style="left:122.70px;top:406.6px;width:0;height:0"><div class="t" style="right:0;top:-4px;line-height:8px;font-size:6.3px;color:#555;transform:rotate(-45deg);transform-origin:right center">2</div></div>
<div class="a" style="left:151.7px;top:404px;width:1.00px;height:1.60px;background:#666;"></div>
<div class="a" style="left:153.60px;top:406.6px;width:0;height:0"><div class="t" style="right:0;top:-4px;line-height:8px;font-size:6.3px;color:#555;transform:rotate(-45deg);transform-origin:right center">3</div></div>
<div class="a" style="left:182.6px;top:404px;width:1.00px;height:1.60px;background:#666;"></div>
<div class="a" style="left:184.50px;top:406.6px;width:0;height:0"><div class="t" style="right:0;top:-4px;line-height:8px;font-size:6.3px;color:#555;transform:rotate(-45deg);transform-origin:right center">4</div></div>
<div class="a" style="left:213.5px;top:404px;width:1.00px;height:1.60px;background:#666;"></div>
<div class="a" style="left:215.40px;top:406.6px;width:0;height:0"><div class="t" style="right:0;top:-4px;line-height:8px;font-size:6.3px;color:#555;transform:rotate(-45deg);transform-origin:right center">5</div></div>
<div class="a" style="left:244.39999999999998px;top:404px;width:1.00px;height:1.60px;background:#666;"></div>
<div class="a" style="left:246.30px;top:406.6px;width:0;height:0"><div class="t" style="right:0;top:-4px;line-height:8px;font-size:6.3px;color:#555;transform:rotate(-45deg);transform-origin:right center">6</div></div>
<div class="a" style="left:275.29999999999995px;top:404px;width:1.00px;height:1.60px;background:#666;"></div>
<div class="a" style="left:277.20px;top:406.6px;width:0;height:0"><div class="t" style="right:0;top:-4px;line-height:8px;font-size:6.3px;color:#555;transform:rotate(-45deg);transform-origin:right center">7</div></div>
<div class="a" style="left:306.2px;top:404px;width:1.00px;height:1.60px;background:#666;"></div>
<div class="a" style="left:308.10px;top:406.6px;width:0;height:0"><div class="t" style="right:0;top:-4px;line-height:8px;font-size:6.3px;color:#555;transform:rotate(-45deg);transform-origin:right center">8</div></div>
<div class="a" style="left:337.09999999999997px;top:404px;width:1.00px;height:1.60px;background:#666;"></div>
<div class="a" style="left:339.00px;top:406.6px;width:0;height:0"><div class="t" style="right:0;top:-4px;line-height:8px;font-size:6.3px;color:#555;transform:rotate(-45deg);transform-origin:right center">9</div></div>
<div class="a" style="left:368.0px;top:404px;width:1.00px;height:1.60px;background:#666;"></div>
<div class="a" style="left:369.90px;top:406.6px;width:0;height:0"><div class="t" style="right:0;top:-4px;line-height:8px;font-size:6.3px;color:#555;transform:rotate(-45deg);transform-origin:right center">10</div></div>
<div class="a" style="left:398.9px;top:404px;width:1.00px;height:1.60px;background:#666;"></div>
<div class="a" style="left:400.80px;top:406.6px;width:0;height:0"><div class="t" style="right:0;top:-4px;line-height:8px;font-size:6.3px;color:#555;transform:rotate(-45deg);transform-origin:right center">11</div></div>
<div class="a" style="left:429.79999999999995px;top:404px;width:1.00px;height:1.60px;background:#666;"></div>
<div class="a" style="left:431.70px;top:406.6px;width:0;height:0"><div class="t" style="right:0;top:-4px;line-height:8px;font-size:6.3px;color:#555;transform:rotate(-45deg);transform-origin:right center">12</div></div>
<div class="a" style="left:460.7px;top:404px;width:1.00px;height:1.60px;background:#666;"></div>
<div class="a" style="left:462.60px;top:406.6px;width:0;height:0"><div class="t" style="right:0;top:-4px;line-height:8px;font-size:6.3px;color:#555;transform:rotate(-45deg);transform-origin:right center">13</div></div>
<div class="a" style="left:491.59999999999997px;top:404px;width:1.00px;height:1.60px;background:#666;"></div>
<div class="a" style="left:493.50px;top:406.6px;width:0;height:0"><div class="t" style="right:0;top:-4px;line-height:8px;font-size:6.3px;color:#555;transform:rotate(-45deg);transform-origin:right center">14</div></div>
<div class="a" style="left:522.5px;top:404px;width:1.00px;height:1.60px;background:#666;"></div>
<div class="a" style="left:524.40px;top:406.6px;width:0;height:0"><div class="t" style="right:0;top:-4px;line-height:8px;font-size:6.3px;color:#555;transform:rotate(-45deg);transform-origin:right center">15</div></div>
<div class="a" style="left:553.4px;top:404px;width:1.00px;height:1.60px;background:#666;"></div>
<div class="a" style="left:555.30px;top:406.6px;width:0;height:0"><div class="t" style="right:0;top:-4px;line-height:8px;font-size:6.3px;color:#555;transform:rotate(-45deg);transform-origin:right center">16</div></div>
<div class="a" style="left:584.3px;top:404px;width:1.00px;height:1.60px;background:#666;"></div>
<div class="a" style="left:586.20px;top:406.6px;width:0;height:0"><div class="t" style="right:0;top:-4px;line-height:8px;font-size:6.3px;color:#555;transform:rotate(-45deg);transform-origin:right center">17</div></div>
<div class="a" style="left:615.1999999999999px;top:404px;width:1.00px;height:1.60px;background:#666;"></div>
<div class="a" style="left:617.10px;top:406.6px;width:0;height:0"><div class="t" style="right:0;top:-4px;line-height:8px;font-size:6.3px;color:#555;transform:rotate(-45deg);transform-origin:right center">18</div></div>
<div class="a" style="left:646.1px;top:404px;width:1.00px;height:1.60px;background:#666;"></div>
<div class="a" style="left:648.00px;top:406.6px;width:0;height:0"><div class="t" style="right:0;top:-4px;line-height:8px;font-size:6.3px;color:#555;transform:rotate(-45deg);transform-origin:right center">19</div></div>
<div class="a" style="left:677.0px;top:404px;width:1.00px;height:1.60px;background:#666;"></div>
<div class="a" style="left:678.90px;top:406.6px;width:0;height:0"><div class="t" style="right:0;top:-4px;line-height:8px;font-size:6.3px;color:#555;transform:rotate(-45deg);transform-origin:right center">20</div></div>
<div class="a" style="left:707.9px;top:404px;width:1.00px;height:1.60px;background:#666;"></div>
<div class="a" style="left:709.80px;top:406.6px;width:0;height:0"><div class="t" style="right:0;top:-4px;line-height:8px;font-size:6.3px;color:#555;transform:rotate(-45deg);transform-origin:right center">21</div></div>
<div class="a" style="left:738.8px;top:404px;width:1.00px;height:1.60px;background:#666;"></div>
<div class="a" style="left:740.70px;top:406.6px;width:0;height:0"><div class="t" style="right:0;top:-4px;line-height:8px;font-size:6.3px;color:#555;transform:rotate(-45deg);transform-origin:right center">22</div></div>
<div class="a" style="left:769.6999999999999px;top:404px;width:1.00px;height:1.60px;background:#666;"></div>
<div class="a" style="left:771.60px;top:406.6px;width:0;height:0"><div class="t" style="right:0;top:-4px;line-height:8px;font-size:6.3px;color:#555;transform:rotate(-45deg);transform-origin:right center">23</div></div>
<div class="a" style="left:785.8px;top:296px;width:0.80px;height:108.40px;background:#666;"></div>
<div class="a" style="left:786px;top:295.6px;width:3.00px;height:0.80px;background:#666;"></div>
<div id="f36" class="t" style="left:790.3px;top:293.22px;font-size:5.5px;line-height:7.15px;color:#333;transform-origin:left center;">20k</div>
<div class="a" style="left:786px;top:322.6px;width:3.00px;height:0.80px;background:#666;"></div>
<div id="f37" class="t" style="left:790.3px;top:320.22px;font-size:5.5px;line-height:7.15px;color:#333;transform-origin:left center;">15k</div>
<div class="a" style="left:786px;top:349.6px;width:3.00px;height:0.80px;background:#666;"></div>
<div id="f38" class="t" style="left:790.3px;top:347.22px;font-size:5.5px;line-height:7.15px;color:#333;transform-origin:left center;">10k</div>
<div class="a" style="left:786px;top:376.6px;width:3.00px;height:0.80px;background:#666;"></div>
<div id="f39" class="t" style="left:790.3px;top:374.22px;font-size:5.5px;line-height:7.15px;color:#333;transform-origin:left center;">5k</div>
<div class="a" style="left:786px;top:403.6px;width:3.00px;height:0.80px;background:#666;"></div>
<div id="f40" class="t" style="left:790.3px;top:401.22px;font-size:5.5px;line-height:7.15px;color:#333;transform-origin:left center;">0</div>
<div class="a" style="left:47.9px;top:425.8px;width:8.90px;height:4.20px;background:#85c2e1;"></div>
<div class="a" style="left:228.8px;top:425.6px;width:8.20px;height:4.40px;background:#f5d327;"></div>
<div id="f41" class="t fit" style="left:59px;top:425.17px;font-size:5.9px;line-height:7.67px;color:#444;transform:scaleX(0.9045);transform-origin:left center;--fw:62.3;">alliance_SA/Watch Guard/</div>
<div id="f42" class="t fit" style="left:122.2px;top:424.86px;font-size:6.37px;line-height:8.28px;color:#444;-webkit-text-stroke:0.05px currentColor;transform:scaleX(0.7778);transform-origin:left center;--fw:28;">トラフィック</div>
<div id="f43" class="t fit" style="left:150.5px;top:425.17px;font-size:5.9px;line-height:7.67px;color:#444;transform:scaleX(0.9140);transform-origin:left center;--fw:38.9;">/SSL-VPN/Allow</div>
<div id="f44" class="t fit" style="left:189.5px;top:424.86px;font-size:6.37px;line-height:8.28px;color:#444;-webkit-text-stroke:0.05px currentColor;transform:scaleX(0.7500);transform-origin:left center;--fw:9;">件数</div>
<div id="f45" class="t fit" style="left:239px;top:425.17px;font-size:5.9px;line-height:7.67px;color:#444;transform:scaleX(0.9045);transform-origin:left center;--fw:62.3;">alliance_SA/Watch Guard/</div>
<div id="f46" class="t fit" style="left:302.2px;top:424.86px;font-size:6.37px;line-height:8.28px;color:#444;-webkit-text-stroke:0.05px currentColor;transform:scaleX(0.7778);transform-origin:left center;--fw:28;">トラフィック</div>
<div id="f47" class="t fit" style="left:330.5px;top:425.17px;font-size:5.9px;line-height:7.67px;color:#444;transform:scaleX(0.8879);transform-origin:left center;--fw:37.5;">/SSL-VPN/Deny</div>
<div id="f48" class="t fit" style="left:368.1px;top:424.86px;font-size:6.37px;line-height:8.28px;color:#444;-webkit-text-stroke:0.05px currentColor;transform:scaleX(0.7500);transform-origin:left center;--fw:9;">件数</div>
<div class="a" style="left:29px;top:450px;width:783.6px;height:100px;border:1px solid #dedede;border-radius:2px;background:#fff"></div>
<div class="a" style="left:30px;top:451px;width:781.60px;height:14.60px;background:linear-gradient(#f4f3f8,#e9e8f1);border-bottom:1px solid #dcdbe4"></div>
<div class="a" style="left:42.5px;top:451px;width:1.00px;height:14.60px;background:#dcdbe4;"></div>
<div class="a" style="left:787.8px;top:451px;width:1.00px;height:14.60px;background:#dcdbe4;"></div>
<div class="a" style="left:806.6px;top:451px;width:1.00px;height:14.60px;background:#dcdbe4;"></div>
<svg style="left:33px;top:455.6px" width="6" height="6" viewBox="0 0 6 6"><rect x="0" y="0" width="5.3" height="5" fill="#a6a6a6"/><rect x="0" y="1.6" width="5.3" height="0.4" fill="#d6d6d6"/><rect x="0" y="3.2" width="5.3" height="0.4" fill="#d6d6d6"/></svg>
<div id="f49" class="t fit" style="left:46.2px;top:455.59px;font-size:6.48px;line-height:8.42px;color:#555;-webkit-text-stroke:0.05px currentColor;transform:scaleX(0.9667);transform-origin:left center;--fw:23.2;">ログ一覧</div>
<svg style="left:794.5px;top:454.5px" width="6" height="6" viewBox="0 0 6 6"><path d="M3 0.3v3M1.5 2l1.5 1.5L4.5 2M0.5 5.3h5" fill="none" stroke="#999" stroke-width="0.9"/></svg>
<div class="a" style="left:35px;top:479.2px;width:764.00px;height:12.00px;background:#0277a5;"></div>
<div id="f50" class="t fit" style="left:111.0px;top:481.33px;font-size:6.26px;line-height:8.14px;color:#fff;-webkit-text-stroke:0.24px currentColor;transform:translateX(-50%) scaleX(0.8889);transform-origin:center center;--fw:16;--pre:translateX(-50%);-webkit-text-stroke:0.1px #fff;">時間帯</div>
<svg style="left:181.5px;top:482.5px" width="3" height="6" viewBox="0 0 3 6"><path d="M1.5 0L3 2.3H0zM1.5 6L3 3.7H0z" fill="#e8f2f8"/></svg>
<div class="a" style="left:186.5px;top:479.2px;width:1.00px;height:12.00px;background:#5ea8c8;"></div>
<div id="f51" class="t fit" style="left:263.5px;top:481.33px;font-size:6.26px;line-height:8.14px;color:#fff;-webkit-text-stroke:0.24px currentColor;transform:translateX(-50%) scaleX(0.9167);transform-origin:center center;--fw:22;--pre:translateX(-50%);-webkit-text-stroke:0.1px #fff;">ログ件数</div>
<svg style="left:334.5px;top:482.5px" width="3" height="6" viewBox="0 0 3 6"><path d="M1.5 0L3 2.3H0zM1.5 6L3 3.7H0z" fill="#e8f2f8"/></svg>
<div class="a" style="left:339.5px;top:479.2px;width:1.00px;height:12.00px;background:#5ea8c8;"></div>
<div id="f52" class="t fit" style="left:416.75px;top:481.33px;font-size:6.26px;line-height:8.14px;color:#fff;-webkit-text-stroke:0.24px currentColor;transform:translateX(-50%) scaleX(0.9619);transform-origin:center center;--fw:67.5;--pre:translateX(-50%);-webkit-text-stroke:0.1px #fff;">合計送受信サイズ(バイト)</div>
<svg style="left:488.0px;top:482.5px" width="3" height="6" viewBox="0 0 3 6"><path d="M1.5 0L3 2.3H0zM1.5 6L3 3.7H0z" fill="#e8f2f8"/></svg>
<div class="a" style="left:493.0px;top:479.2px;width:1.00px;height:12.00px;background:#5ea8c8;"></div>
<div id="f53" class="t fit" style="left:569.65px;top:481.33px;font-size:6.26px;line-height:8.14px;color:#fff;-webkit-text-stroke:0.24px currentColor;transform:translateX(-50%) scaleX(0.8649);transform-origin:center center;--fw:23;--pre:translateX(-50%);-webkit-text-stroke:0.1px #fff;">Deny件数</div>
<svg style="left:640.3px;top:482.5px" width="3" height="6" viewBox="0 0 3 6"><path d="M1.5 0L3 2.3H0zM1.5 6L3 3.7H0z" fill="#e8f2f8"/></svg>
<div class="a" style="left:645.3px;top:479.2px;width:1.00px;height:12.00px;background:#5ea8c8;"></div>
<div id="f54" class="t fit" style="left:722.4px;top:481.33px;font-size:6.26px;line-height:8.14px;color:#fff;-webkit-text-stroke:0.24px currentColor;transform:translateX(-50%) scaleX(0.9281);transform-origin:center center;--fw:25;--pre:translateX(-50%);-webkit-text-stroke:0.1px #fff;">Allow件数</div>
<svg style="left:793.5px;top:482.5px" width="3" height="6" viewBox="0 0 3 6"><path d="M1.5 0L3 2.3H0zM1.5 6L3 3.7H0z" fill="#e8f2f8"/></svg>
<div class="a" style="left:35px;top:491.2px;width:764.00px;height:12.40px;background:#f9f9f9;"></div>
<div class="a" style="left:35px;top:503.6px;width:764.00px;height:12.10px;background:#fff;"></div>
<div class="a" style="left:35px;top:515.7px;width:764.00px;height:4.30px;background:#f9f9f9;"></div>
<div class="a" style="left:35px;top:503.1px;width:764.00px;height:1.00px;background:#e6e6e6;"></div>
<div class="a" style="left:35px;top:515.2px;width:764.00px;height:1.00px;background:#e6e6e6;"></div>
<div class="a" style="left:186.5px;top:491.2px;width:1.00px;height:28.80px;background:#ececec;"></div>
<div class="a" style="left:339.5px;top:491.2px;width:1.00px;height:28.80px;background:#ececec;"></div>
<div class="a" style="left:493.0px;top:491.2px;width:1.00px;height:28.80px;background:#ececec;"></div>
<div class="a" style="left:645.3px;top:491.2px;width:1.00px;height:28.80px;background:#ececec;"></div>
<div class="a" style="left:34.5px;top:491.2px;width:1.00px;height:28.80px;background:#e6e6e6;"></div>
<div id="f55" class="t" style="left:38px;top:495.03px;font-size:5.8px;line-height:7.54px;color:#333;transform-origin:left center;">0</div>
<div id="f56" class="t" style="left:337.5px;top:495.03px;font-size:5.8px;line-height:7.54px;color:#333;transform:translateX(-100%);transform-origin:right center;">10,756</div>
<div id="f57" class="t" style="left:491.0px;top:495.03px;font-size:5.8px;line-height:7.54px;color:#333;transform:translateX(-100%);transform-origin:right center;">3,517,323</div>
<div id="f58" class="t" style="left:643.3px;top:495.03px;font-size:5.8px;line-height:7.54px;color:#333;transform:translateX(-100%);transform-origin:right center;">0</div>
<div id="f59" class="t" style="left:796.5px;top:495.03px;font-size:5.8px;line-height:7.54px;color:#333;transform:translateX(-100%);transform-origin:right center;">10,756</div>
<div id="f60" class="t" style="left:38px;top:507.23px;font-size:5.8px;line-height:7.54px;color:#333;transform-origin:left center;">1</div>
<div id="f61" class="t" style="left:337.5px;top:507.23px;font-size:5.8px;line-height:7.54px;color:#333;transform:translateX(-100%);transform-origin:right center;">10,770</div>
<div id="f62" class="t" style="left:491.0px;top:507.23px;font-size:5.8px;line-height:7.54px;color:#333;transform:translateX(-100%);transform-origin:right center;">3,520,945</div>
<div id="f63" class="t" style="left:643.3px;top:507.23px;font-size:5.8px;line-height:7.54px;color:#333;transform:translateX(-100%);transform-origin:right center;">0</div>
<div id="f64" class="t" style="left:796.5px;top:507.23px;font-size:5.8px;line-height:7.54px;color:#333;transform:translateX(-100%);transform-origin:right center;">10,770</div>
<div id="f65" class="t" style="left:38px;top:519.23px;font-size:5.8px;line-height:7.54px;color:#333;transform-origin:left center;">2</div>
<div id="f66" class="t" style="left:337.5px;top:519.23px;font-size:5.8px;line-height:7.54px;color:#333;transform:translateX(-100%);transform-origin:right center;">10,758</div>
<div id="f67" class="t" style="left:491.0px;top:519.23px;font-size:5.8px;line-height:7.54px;color:#333;transform:translateX(-100%);transform-origin:right center;">3,512,788</div>
<div id="f68" class="t" style="left:643.3px;top:519.23px;font-size:5.8px;line-height:7.54px;color:#333;transform:translateX(-100%);transform-origin:right center;">0</div>
<div id="f69" class="t" style="left:796.5px;top:519.23px;font-size:5.8px;line-height:7.54px;color:#333;transform:translateX(-100%);transform-origin:right center;">10,758</div>
<div class="a" style="left:800px;top:492.4px;width:6.50px;height:27.60px;background:#f1f1f1;"></div>
<div class="a" style="left:800.8px;top:500px;width:4.90px;height:20.00px;background:#c1c1c1;"></div>
<svg style="left:801.5px;top:494px" width="4" height="3" viewBox="0 0 4 3"><path d="M0.3 2.5L2 0.6L3.7 2.5z" fill="#777"/></svg>
<div class="a" style="left:0px;top:512.1px;width:80.00px;height:7.90px;background:#e7e7ea;border-top-right-radius:2px;border-top:0.6px solid #d8d8dc;border-right:0.6px solid #d8d8dc"></div>
<div id="f70" class="t fit" style="left:1.0px;top:512.70px;font-size:6.0px;line-height:7.80px;color:#666;transform:scaleX(0.8797);transform-origin:left center;--fw:76;"><span style="color:#444">demo</span>.logstare.com/soc/index.do</div>
<div class="a" style="left:0px;top:519.6px;width:826.00px;height:100.40px;background:#fff;"></div>
<script>
(function(){
  var els=document.querySelectorAll('.fit');
  for(var i=0;i<els.length;i++){
    var e=els[i];
    var w=parseFloat(e.style.getPropertyValue('--fw'));
    var pre=(e.style.getPropertyValue('--pre')||'').trim();
    e.style.transform='none';
    var r=document.createRange(); r.selectNodeContents(e);
    var nw=r.getBoundingClientRect().width;
    if(nw>0 && w>0){ e.style.transform=(pre+' scaleX('+(w/nw).toFixed(4)+')').trim(); }
    else if(pre){ e.style.transform=pre; }
  }
})();
</script>
</body></html>
